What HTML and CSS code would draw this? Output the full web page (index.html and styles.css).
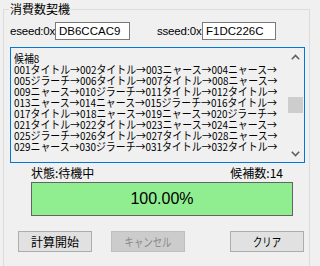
FILE: index.html
```html
<!DOCTYPE html>
<html lang="ja">
<head>
<meta charset="utf-8">
<title>消費数契機</title>
<link rel="stylesheet" href="styles.css">
</head>
<body>
<div class="group">
  <div class="title">消費数契機</div>
  <div class="seed-row">
    <div class="seed">
      <span class="seed-label">eseed:0x</span>
      <div class="input">DB6CCAC9</div>
    </div>
    <div class="seed">
      <span class="seed-label">sseed:0x</span>
      <div class="input">F1DC226C</div>
    </div>
  </div>
  <div class="listbox">
    <div class="list-text">
      <div class="lines">
        <div>候補8</div>
        <div>001タイトル→002タイトル→003ニャース→004ニャース→</div>
        <div>005ジラーチ→006タイトル→007タイトル→008ニャース→</div>
        <div>009ニャース→010ジラーチ→011タイトル→012タイトル→</div>
        <div>013ニャース→014ニャース→015ジラーチ→016タイトル→</div>
        <div>017タイトル→018ニャース→019ニャース→020ジラーチ→</div>
        <div>021タイトル→022タイトル→023ニャース→024ニャース→</div>
        <div>025ジラーチ→026タイトル→027タイトル→028ニャース→</div>
        <div>029ニャース→030ジラーチ→031タイトル→032タイトル→</div>
      </div>
    </div>
    <div class="scrollbar">
      <div class="sb-btn">
        <svg width="9" height="6" viewBox="0 0 9 6"><path d="M0.8 5.2 L4.5 1.5 L8.2 5.2" fill="none" stroke="#606060" stroke-width="1.6"/></svg>
      </div>
      <div class="sb-track"><div class="sb-thumb"></div></div>
      <div class="sb-btn">
        <svg width="9" height="6" viewBox="0 0 9 6"><path d="M0.8 0.8 L4.5 4.5 L8.2 0.8" fill="none" stroke="#606060" stroke-width="1.6"/></svg>
      </div>
    </div>
  </div>
  <div class="status-row">
    <span>状態:待機中</span>
    <span>候補数:14</span>
  </div>
  <div class="progress">100.00%</div>
  <div class="buttons">
    <div class="btn"><span>計算開始</span></div>
    <div class="btn disabled"><span class="narrow">キャンセル</span></div>
    <div class="btn clear"><span class="narrow">クリア</span></div>
  </div>
</div>
</body>
</html>
```
FILE: styles.css
```css
html, body {
  margin: 0;
  padding: 0;
  background: #f0f0f0;
  width: 313px;
  height: 266px;
  overflow: hidden;
}
body {
  font-family: "Noto Sans CJK JP", "Liberation Sans", sans-serif;
  font-size: 12px;
  color: #000;
}
.group {
  box-sizing: border-box;
  margin: 9px 3px 0 3px;
  height: 257px;
  border: 1px solid #dcdcdc;
  border-bottom: none;
}
.title {
  margin: -8px 0 0 5px;
  padding: 0 1px;
  width: fit-content;
  background: #f0f0f0;
  line-height: 14px;
  font-size: 12px;
}
.seed-row {
  display: flex;
  gap: 27px;
  margin-top: 6px;
  padding-left: 6px;
}
.seed {
  display: flex;
  align-items: center;
}
.seed-label {
  font-family: "Liberation Sans", sans-serif;
  font-size: 11.5px;
  width: 45px;
  letter-spacing: -0.2px;
}
.input {
  box-sizing: border-box;
  width: 75px;
  height: 18px;
  border: 1px solid #7a7a7a;
  background: #fff;
  font-family: "Liberation Sans", sans-serif;
  font-size: 11.5px;
  line-height: 16px;
  padding-left: 3px;
}
.seed + .seed .input { width: 74px; }
.listbox {
  box-sizing: border-box;
  display: flex;
  margin: 7px 0 0 6px;
  width: 295px;
  height: 116px;
  border: 1px solid #0078d7;
  background: #f0f0f0;
}
.list-text {
  flex: 1;
  overflow: hidden;
  padding: 5px 0 0 3px;
}
.lines {
  white-space: nowrap;
  font-size: 11px;
  line-height: 11px;
  transform: scaleX(0.9);
  transform-origin: left top;
}
.scrollbar {
  width: 17px;
  display: flex;
  flex-direction: column;
  background: #f0f0f0;
}
.sb-btn {
  height: 17px;
  display: flex;
  align-items: center;
  justify-content: center;
}
.sb-track {
  flex: 1;
  padding: 32px 1px 0 1px;
}
.sb-thumb {
  height: 16px;
  background: #cdcdcd;
}
.status-row {
  display: flex;
  justify-content: space-between;
  margin: 3px 0 0 27px;
  width: 252px;
  line-height: 14px;
  font-size: 12px;
}
.progress {
  box-sizing: border-box;
  margin: 2px 0 0 27px;
  width: 262px;
  height: 34px;
  border: 1px solid #646464;
  background: #90ee90;
  font-family: "Liberation Sans", sans-serif;
  font-size: 16px;
  display: flex;
  align-items: center;
  justify-content: center;
}
.buttons {
  display: flex;
  margin: 15px 0 0 14px;
  gap: 19px;
}
.btn {
  box-sizing: border-box;
  width: 74px;
  height: 21px;
  border: 1px solid #adadad;
  background: #e1e1e1;
  display: flex;
  align-items: center;
  justify-content: center;
  font-size: 12px;
  line-height: 14px;
}
.btn.disabled {
  background: #cccccc;
  border-color: #bfbfbf;
  color: #8a8a8a;
}
.btn.clear {
  margin-left: 26px;
}
.narrow {
  display: inline-block;
  transform: scaleX(0.78);
}
```
